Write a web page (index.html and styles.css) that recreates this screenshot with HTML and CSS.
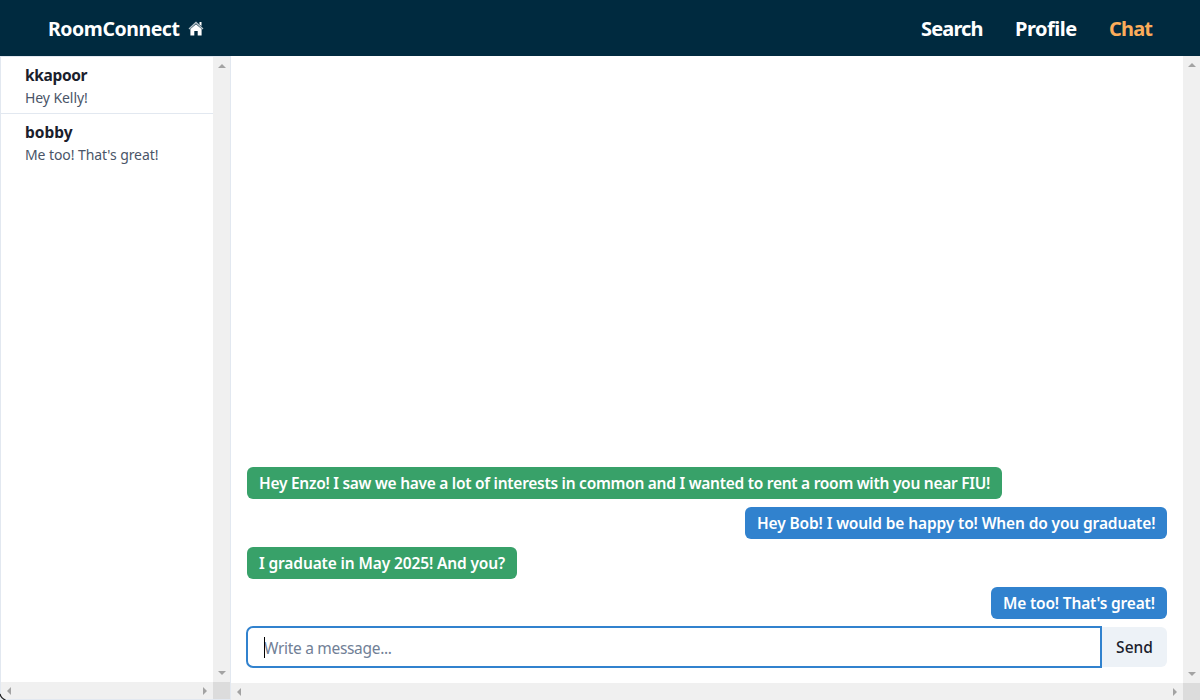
FILE: index.html
```html
<!DOCTYPE html>
<html lang="en">
<head>
<meta charset="utf-8">
<title>RoomConnect</title>
<link rel="stylesheet" href="styles.css">
</head>
<body>
<div class="app">
  <header class="navbar">
    <a class="brand"><span class="brand-name">RoomConnect</span>
      <svg class="home" width="16" height="15" viewBox="0 0 16 15"><path d="M1 8 8 1.5l7 6.500" fill="none" stroke="#b9c5cc" stroke-width="1.3"/><path d="M11.500 1h2v4l-2-1.600z" fill="#fff"/><path d="M8 3.200 13.600 8v6.500H9.700V10H6.300v4.500H2.400V8z" fill="#fff"/></svg>
    </a>
    <nav class="links"><a class="search">Search</a><a class="profile">Profile</a><a class="active">Chat</a></nav>
  </header>
  <div class="workspace">
    <aside class="sidebar">
      <div class="threads">
        <div class="thread"><div class="name">kkapoor</div><div class="preview">Hey Kelly!</div></div>
        <div class="thread"><div class="name bob">bobby</div><div class="preview">Me too! That's great!</div></div>
      </div>
      <div class="bar vertical"><i class="up"></i><i class="down"></i></div>
      <div class="bar horizontal"><i class="left"></i><i class="right"></i></div>
      <div class="corner"></div>
    </aside>
    <main class="chat">
      <div class="conversation">
        <div class="bubble theirs m1"><span>Hey Enzo! I saw we have a lot of interests in common and I wanted to rent a room with you near FIU!</span></div>
        <div class="bubble mine m2"><span>Hey Bob! I would be happy to! When do you graduate!</span></div>
        <div class="bubble theirs m3"><span>I graduate in May 2025! And you?</span></div>
        <div class="bubble mine m4"><span>Me too! That's great!</span></div>
        <div class="composer"><div class="field"><i class="caret"></i><span>Write a message...</span></div><button class="send">Send</button></div>
      </div>
      <div class="bar vertical"><i class="up"></i><i class="down"></i></div>
      <div class="bar horizontal"><i class="left"></i><i class="right"></i></div>
      <div class="corner"></div>
    </main>
  </div>
  <svg class="frame-edge" width="8" height="8" viewBox="0 0 8 8"><path d="M0 1.200Q1 6 6.500 8H0z" fill="#e9edf2"/><path d="M0 2Q1 6.500 5.500 8" fill="none" stroke="#222" stroke-width="1.3"/></svg>
</div>
</body>
</html>
```
FILE: styles.css
```css
* { box-sizing: border-box; }
body { margin: 0; font-family: "Noto Sans", "Open Sans", sans-serif; font-size: 16px; line-height: 24px; color: #1a202c; white-space: nowrap; }
.app { position: relative; width: 1200px; height: 700px; display: flex; flex-direction: column; overflow: hidden; background: #fff; }
.navbar { height: 56px; flex: none; background: #002a3f; color: #fff; padding: 2px 48px 0; display: flex; justify-content: space-between; align-items: center; font-size: 20px; font-weight: 700; line-height: 30px; }
.brand { display: flex; align-items: center; }
.brand-name { width: 140px; font-size: 19.5px; letter-spacing: -0.45px; }
.home { margin-top: -2px; }
.links { display: flex; gap: 32px; letter-spacing: -0.85px; }
.search, .profile { width: 62px; }
.profile { letter-spacing: -0.5px; }
.active { width: 43px; color: #fbac5a; }
.workspace { flex: 1; min-height: 0; display: flex; }
.sidebar { width: 231px; border: 1px solid #e2e8f0; display: grid; grid-template-columns: 1fr 17px; grid-template-rows: 1fr 17px; }
.chat { flex: 1; display: grid; grid-template-columns: 1fr 17px; grid-template-rows: 1fr 17px; }
.thread { height: 57px; padding: 6px 24px 0; border-bottom: 1px solid #e2e8f0; }
.thread:last-child { border-bottom: 0; }
.name { font-weight: 700; font-size: 15.5px; line-height: 24px; letter-spacing: -0.35px; }
.bob { letter-spacing: 0; }
.preview { font-size: 14px; line-height: 21px; color: #4a5568; letter-spacing: -0.08px; }
.conversation { padding: 0 16px 16px; display: flex; flex-direction: column; justify-content: flex-end; gap: 8px; }
.bubble { height: 32px; padding: 4px 12px; border-radius: 6px; color: #fff; font-size: 15.5px; font-weight: 600; line-height: 24px; letter-spacing: -0.13px; }
.theirs { background: #38a169; align-self: flex-start; }
.mine { background: #3182ce; align-self: flex-end; }
.m1 { width: 755px; letter-spacing: -0.27px; }
.m2 { width: 422px; }
.m3 { width: 270px; }
.m4 { width: 176px; letter-spacing: -0.18px; }
.composer { display: flex; height: 40px; }
.field { position: relative; flex: 1; height: 42px; margin: -1px 0 -1px -1px; border: 2px solid #3182ce; border-radius: 7px 0 0 7px; padding: 8px 16px; color: #718096; font-size: 15.5px; letter-spacing: -0.31px; }
.caret { position: absolute; left: 16px; top: 9px; width: 1px; height: 21px; background: #000; }
.send { width: 65px; height: 40px; padding: 0; border: 0; border-radius: 0 6px 6px 0; background: #edf2f7; color: #1a202c; font: 500 15.5px/24px "Noto Sans", "Open Sans", sans-serif; }
.bar { display: flex; justify-content: space-between; align-items: center; background: #f0f0f0; }
.bar i { border: 4px solid transparent; }
.vertical { flex-direction: column; padding: 7px 0; }
.horizontal { padding: 0 6px; }
.bar .up { border-top: 0; border-bottom-color: #a3a3a3; }
.bar .down { border-bottom: 0; border-top-color: #a3a3a3; }
.bar .left { border-left: 0; border-right-color: #a3a3a3; }
.bar .right { border-right: 0; border-left-color: #a3a3a3; }
.corner { background: #dcdcdc; }
.frame-edge { position: absolute; left: 0; bottom: 0; }
```
